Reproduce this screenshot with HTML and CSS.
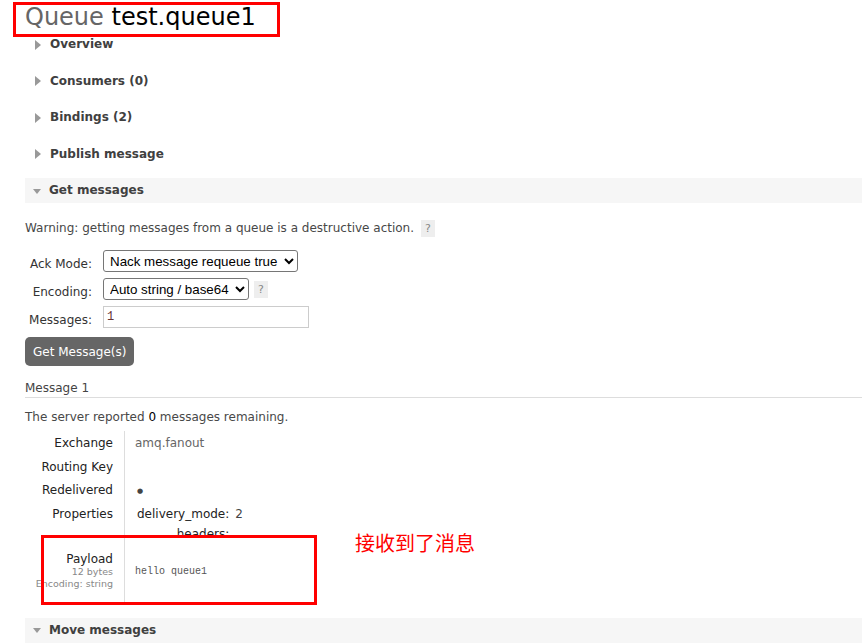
FILE: index.html
```html
<!DOCTYPE html>
<html>
<head>
<meta charset="utf-8">
<link rel="stylesheet" href="styles.css">
</head>
<body>
<div class="page">
  <h1 class="title">Queue <b>test.queue1</b></h1>
  <div class="sections">
    <div class="section"><h2 class="sec-head"><span class="tri closed"></span>Overview</h2></div>
    <div class="section"><h2 class="sec-head"><span class="tri closed"></span>Consumers (0)</h2></div>
    <div class="section"><h2 class="sec-head"><span class="tri closed"></span>Bindings (2)</h2></div>
    <div class="section"><h2 class="sec-head"><span class="tri closed"></span>Publish message</h2></div>
    <div class="section">
      <h2 class="sec-head open"><span class="tri opened"></span>Get messages</h2>
      <div class="sec-body">
        <p class="warning">Warning: getting messages from a queue is a destructive action. <span class="help">?</span></p>
        <div class="form">
          <label class="lbl">Ack Mode:</label>
          <div class="ctl"><select class="sel sel-ack"><option>Nack message requeue true</option></select></div>
          <label class="lbl">Encoding:</label>
          <div class="ctl"><select class="sel sel-enc"><option>Auto string / base64</option></select><span class="help">?</span></div>
          <label class="lbl">Messages:</label>
          <div class="ctl"><input class="txt" type="text" value="1"></div>
        </div>
        <button class="btn">Get Message(s)</button>
        <h3 class="msg-title">Message 1</h3>
        <p class="remaining">The server reported <b>0</b> messages remaining.</p>
        <table class="facts">
          <tr><th>Exchange</th><td class="val">amq.fanout</td></tr>
          <tr><th>Routing Key</th><td class="val"></td></tr>
          <tr><th>Redelivered</th><td class="val"><span class="dot">&#9679;</span></td></tr>
          <tr><th>Properties</th><td class="val">
            <table class="props">
              <tr><th>delivery_mode:</th><td>2</td></tr>
              <tr><th>headers:</th><td></td></tr>
            </table>
          </td></tr>
          <tr class="payload-row"><th><span class="pl">Payload</span><span class="sub">12 bytes</span><span class="sub">Encoding: string</span></th><td class="val"><pre class="payload">hello queue1</pre></td></tr>
        </table>
      </div>
    </div>
    <div class="section"><h2 class="sec-head open"><span class="tri opened"></span>Move messages</h2></div>
  </div>
  <div class="mark mark-title"></div>
  <div class="mark mark-payload"></div>
  <div class="note">接收到了消息</div>
</div>
</body>
</html>
```

FILE: styles.css
```css
html, body {
  margin: 0;
  padding: 0;
  background: #fff;
}
body {
  font-family: "DejaVu Sans", Verdana, sans-serif;
  font-size: 12px;
  color: #484848;
  overflow: hidden;
}
.page {
  position: relative;
  padding-left: 25px;
  width: 837px;
  height: 643px;
}
.title {
  margin: 0;
  height: 32px;
  line-height: 34px;
  font-size: 24px;
  font-weight: normal;
  color: #666;
}
.title b {
  font-weight: normal;
  color: #000;
}
.sections {
  display: flex;
  flex-direction: column;
  gap: 11.5px;
}
.sec-head {
  margin: 0;
  height: 25px;
  line-height: 25px;
  font-size: 12px;
  font-weight: bold;
  color: #404040;
  display: flex;
  align-items: center;
  padding-left: 10px;
}
.sec-head.open {
  background: #f6f6f6;
  padding-left: 8px;
}
.tri {
  display: inline-block;
  width: 0;
  height: 0;
}
.tri.closed {
  border-left: 6px solid #999;
  border-top: 5px solid transparent;
  border-bottom: 5px solid transparent;
  margin-right: 9px;
}
.tri.opened {
  border-top: 5px solid #999;
  border-left: 4.5px solid transparent;
  border-right: 4.5px solid transparent;
  margin-right: 8px;
  margin-top: 1px;
}
.sec-body {
  padding-top: 17px;
}
.warning {
  margin: 0;
  line-height: 16px;
}
.help {
  display: inline-block;
  width: 14px;
  height: 17px;
  line-height: 17px;
  text-align: center;
  background: #eee;
  color: #888;
  font-size: 11px;
  vertical-align: middle;
  margin-left: 3px;
}
.form {
  display: grid;
  grid-template-columns: 67px auto;
  column-gap: 11px;
  row-gap: 6px;
  margin-top: 13px;
}
.lbl {
  text-align: right;
  color: #333;
  padding-top: 6px;
  line-height: 16px;
}
.ctl {
  display: flex;
  align-items: center;
  gap: 5px;
}
.sel {
  font-family: "Liberation Sans", Arial, sans-serif;
  font-size: 13.333px;
  height: 22px;
  color: #000;
  background: #fff;
  border: 1px solid #767676;
  border-radius: 3px;
  padding: 0 2px;
}
.sel-ack { width: 195px; }
.sel-enc { width: 146px; }
.ctl .help { margin-left: 0; }
.txt {
  width: 206px;
  height: 22px;
  box-sizing: border-box;
  border: 1px solid #ccc;
  padding: 0 3px;
  font-family: "Liberation Mono", "Courier New", monospace;
  font-size: 12px;
  color: #633;
}
.btn {
  display: block;
  margin-top: 9px;
  height: 29px;
  padding: 0 8px;
  background: #666;
  color: #fff;
  border: none;
  border-radius: 5px;
  font-family: "DejaVu Sans", Verdana, sans-serif;
  font-size: 12px;
}
.msg-title {
  margin: 14px 0 0;
  font-size: 12px;
  font-weight: normal;
  line-height: 16px;
  color: #444;
  border-bottom: 1px solid #ddd;
  padding-bottom: 1px;
}
.remaining {
  margin: 11px 0 0;
  line-height: 16px;
}
.remaining b {
  font-weight: normal;
  color: #000;
}
.facts {
  margin-top: 6px;
  margin-bottom: 4.5px;
  border-collapse: collapse;
}
.facts > tbody > tr > th {
  width: 88px;
  text-align: right;
  font-weight: normal;
  color: #222;
  padding: 4px 11px 3.5px 0;
  line-height: 16px;
  vertical-align: top;
  white-space: nowrap;
}
.facts > tbody > tr > td.val {
  border-left: 1px solid #ddd;
  padding: 4px 10px 3.5px;
  line-height: 16px;
  vertical-align: top;
  color: #666;
  width: 300px;
}
.dot {
  font-size: 7px;
  color: #444;
  padding-left: 2px;
  vertical-align: middle;
}
.props {
  border-collapse: collapse;
  margin-left: 2px;
}
.props th {
  text-align: right;
  font-weight: normal;
  color: #222;
  padding: 0 4px 4px 0;
  line-height: 16px;
}
.props td {
  color: #444;
  padding: 0 0 4px 2px;
  line-height: 16px;
}
.facts > tbody > tr.payload-row > th {
  padding-top: 2px;
  padding-bottom: 12px;
}
.pl {
  display: block;
  line-height: 14px;
}
.sub {
  display: block;
  font-size: 9.5px;
  line-height: 12px;
  color: #888;
}
.facts > tbody > tr.payload-row > td.val {
  padding-top: 16px;
}
.payload {
  margin: 0;
  font-family: "Liberation Mono", "Courier New", monospace;
  font-size: 10px;
  line-height: 12px;
  color: #555;
}
.mark {
  position: absolute;
  border: 3px solid #f00;
  box-sizing: border-box;
}
.mark-title {
  left: 13px;
  top: 2px;
  width: 267px;
  height: 35px;
}
.mark-payload {
  left: 41px;
  top: 535px;
  width: 276px;
  height: 70px;
}
.note {
  position: absolute;
  left: 355px;
  top: 529px;
  font-family: "Noto Sans CJK SC", sans-serif;
  font-size: 20px;
  line-height: 28px;
  color: #f00;
}
```
